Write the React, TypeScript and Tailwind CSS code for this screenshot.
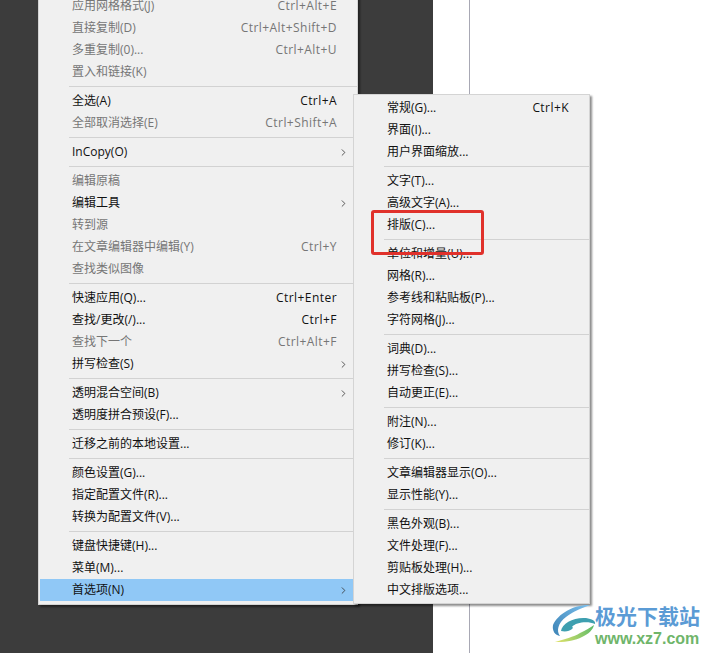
import { ChevronRight } from 'lucide-react';

type MenuItem = {
  label?: string;
  shortcut?: string;
  disabled?: boolean;
  arrow?: boolean;
  active?: boolean;
  separator?: boolean;
};

const sep: MenuItem = { separator: true };

const mainItems: MenuItem[] = [
  { label: '应用网格格式(J)', shortcut: 'Ctrl+Alt+E', disabled: true },
  { label: '直接复制(D)', shortcut: 'Ctrl+Alt+Shift+D', disabled: true },
  { label: '多重复制(0)...', shortcut: 'Ctrl+Alt+U', disabled: true },
  { label: '置入和链接(K)', disabled: true },
  sep,
  { label: '全选(A)', shortcut: 'Ctrl+A' },
  { label: '全部取消选择(E)', shortcut: 'Ctrl+Shift+A', disabled: true },
  sep,
  { label: 'InCopy(O)', arrow: true },
  sep,
  { label: '编辑原稿', disabled: true },
  { label: '编辑工具', arrow: true },
  { label: '转到源', disabled: true },
  { label: '在文章编辑器中编辑(Y)', shortcut: 'Ctrl+Y', disabled: true },
  { label: '查找类似图像', disabled: true },
  sep,
  { label: '快速应用(Q)...', shortcut: 'Ctrl+Enter' },
  { label: '查找/更改(/)...', shortcut: 'Ctrl+F' },
  { label: '查找下一个', shortcut: 'Ctrl+Alt+F', disabled: true },
  { label: '拼写检查(S)', arrow: true },
  sep,
  { label: '透明混合空间(B)', arrow: true },
  { label: '透明度拼合预设(F)...' },
  sep,
  { label: '迁移之前的本地设置...' },
  sep,
  { label: '颜色设置(G)...' },
  { label: '指定配置文件(R)...' },
  { label: '转换为配置文件(V)...' },
  sep,
  { label: '键盘快捷键(H)...' },
  { label: '菜单(M)...' },
  { label: '首选项(N)', arrow: true, active: true },
];

const subItems: MenuItem[] = [
  { label: '常规(G)...', shortcut: 'Ctrl+K' },
  { label: '界面(I)...' },
  { label: '用户界面缩放...' },
  sep,
  { label: '文字(T)...' },
  { label: '高级文字(A)...' },
  { label: '排版(C)...' },
  sep,
  { label: '单位和增量(U)...' },
  { label: '网格(R)...' },
  { label: '参考线和粘贴板(P)...' },
  { label: '字符网格(J)...' },
  sep,
  { label: '词典(D)...' },
  { label: '拼写检查(S)...' },
  { label: '自动更正(E)...' },
  sep,
  { label: '附注(N)...' },
  { label: '修订(K)...' },
  sep,
  { label: '文章编辑器显示(O)...' },
  { label: '显示性能(Y)...' },
  sep,
  { label: '黑色外观(B)...' },
  { label: '文件处理(F)...' },
  { label: '剪贴板处理(H)...' },
  { label: '中文排版选项...' },
];

const MenuRow = ({ item }: { item: MenuItem }) => {
  if (item.separator) {
    return (
      <div className="flex h-[7px] items-center pl-[29px]">
        <div className="h-px w-full bg-[#d2d2d2]" />
      </div>
    );
  }
  return (
    <div
      className={`flex h-[22px] items-center justify-between pl-[32px] pr-[8px] text-[12px] ${
        item.disabled ? 'text-[#767676]' : 'text-[#111111]'
      } ${item.active ? 'bg-[#90c8f6]' : ''}`}
    >
      <span>{item.label}</span>
      {item.shortcut && <span className="pr-[12px] tracking-[0.44px]">{item.shortcut}</span>}
      {item.arrow && <ChevronRight className="h-[11px] w-[11px] text-[#333333]" strokeWidth={1.75} />}
    </div>
  );
};

const App = () => {
  return (
    <div
      className="relative flex h-[653px] w-[711px] overflow-hidden bg-white"
      style={{ fontFamily: '"Open Sans", "Noto Sans CJK SC", sans-serif' }}
    >
      <div className="h-full w-[433px] bg-[#3c3c3c]" />
      <div className="ml-[36px] h-full w-px bg-[#a8a8b4]" />

      <div className="absolute left-[38px] top-[-6px] w-[320px] border border-[#d4d4d4] bg-[#f0f0f0] pb-[3px] pl-[1px] shadow-[2px_2px_2px_rgba(0,0,0,0.45)]">
        {mainItems.map((item, i) => (
          <MenuRow item={item} key={i} />
        ))}
      </div>

      <div className="absolute left-[353px] top-[94px] w-[237px] border border-[#d4d4d4] bg-[#f0f0f0] py-[2px] pl-[1px] shadow-[2px_2px_2px_rgba(0,0,0,0.45)]">
        {subItems.map((item, i) => (
          <MenuRow item={item} key={i} />
        ))}
      </div>

      <div className="absolute left-[371px] top-[210px] h-[45px] w-[113px] rounded-[3px] border-[3px] border-[#e0312b]" />

      <div className="absolute left-[552px] top-[603px] flex items-start">
        <svg className="h-[42px] w-[44px]" viewBox="0 0 44 42" fill="none">
          <defs>
            <linearGradient id="tail" x1="42" y1="22" x2="3" y2="39" gradientUnits="userSpaceOnUse">
              <stop offset="0" stopColor="#5cbb6a" />
              <stop offset="1" stopColor="#e3e36a" />
            </linearGradient>
            <linearGradient id="swoosh" x1="38" y1="2" x2="1" y2="30" gradientUnits="userSpaceOnUse">
              <stop offset="0" stopColor="#7cc0ee" />
              <stop offset="1" stopColor="#3f86b8" />
            </linearGradient>
          </defs>
          <path d="M38 2 C24 1 6 10 1 22 C0 28 3 32 8 33 C4 28 6 20 14 14 C20 9 30 5 38 2Z" fill="url(#swoosh)" />
          <path d="M9 28 C10 20 22 14 34 15 C40 16 44 18 43 21 C36 18 24 19 20 24 C23 24 18 30 9 28Z" fill="#3e9fb0" />
          <path d="M42 22 C40 32 22 40 3 39 C12 36 22 34 28 30 C34 27 38 25 42 22Z" fill="url(#tail)" />
        </svg>
        <div className="ml-[-1px] flex flex-col">
          <span className="text-[21px] font-bold leading-[24px] text-[#5b9bd5]" style={{ fontFamily: '"Noto Sans CJK SC", sans-serif' }}>
            极光下载站
          </span>
          <span className="mt-[3px] text-[16px] font-bold leading-[17px] text-[#6fb56a]" style={{ fontFamily: '"Liberation Sans", sans-serif' }}>
            www.xz7.com
          </span>
        </div>
      </div>
    </div>
  );
};

export default App;
